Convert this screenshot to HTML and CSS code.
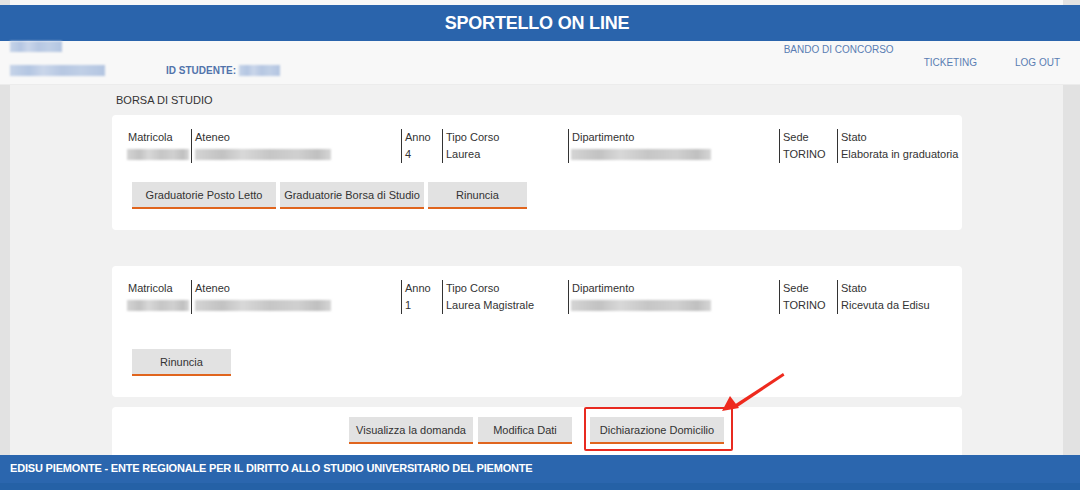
FILE: index.html
```html
<!DOCTYPE html>
<html lang="it">
<head>
<meta charset="utf-8">
<title>Sportello On Line</title>
<link rel="stylesheet" href="styles.css">
</head>
<body>
<div class="page">
  <div class="top-strip"></div>
  <header class="header"><h1 class="title">SPORTELLO ON LINE</h1></header>
  <div class="userbar">
    <div class="user-left">
      <div class="blur blur-blue blur-name"></div>
      <div class="user-row">
        <div class="blur blur-blue blur-cf"></div>
        <span class="id-label">ID STUDENTE:</span>
        <div class="blur blur-blue blur-id"></div>
      </div>
    </div>
    <nav class="user-nav">
      <a class="nav-link nav-top">BANDO DI CONCORSO</a>
      <a class="nav-link nav-low nav-ticket">TICKETING</a>
      <a class="nav-link nav-low nav-logout">LOG OUT</a>
    </nav>
  </div>
  <main class="main">
    <div class="section-title">BORSA DI STUDIO</div>

    <section class="card card-first">
      <div class="grid">
        <div class="col c-matr"><div>Matricola</div><div class="blur blur-gray b-matr"></div></div>
        <div class="col c-ate sep"><div>Ateneo</div><div class="blur blur-gray b-ate"></div></div>
        <div class="col c-anno sep"><div>Anno</div><div>4</div></div>
        <div class="col c-tipo sep"><div>Tipo Corso</div><div>Laurea</div></div>
        <div class="col c-dip sep"><div>Dipartimento</div><div class="blur blur-gray b-dip"></div></div>
        <div class="col c-sede sep"><div>Sede</div><div>TORINO</div></div>
        <div class="col c-stato sep"><div>Stato</div><div>Elaborata in graduatoria</div></div>
      </div>
      <div class="btns">
        <button class="btn btn-wide">Graduatorie Posto Letto</button>
        <button class="btn btn-wide">Graduatorie Borsa di Studio</button>
        <button class="btn btn-rin">Rinuncia</button>
      </div>
    </section>

    <section class="card card-second">
      <div class="grid">
        <div class="col c-matr"><div>Matricola</div><div class="blur blur-gray b-matr"></div></div>
        <div class="col c-ate sep"><div>Ateneo</div><div class="blur blur-gray b-ate"></div></div>
        <div class="col c-anno sep"><div>Anno</div><div>1</div></div>
        <div class="col c-tipo sep"><div>Tipo Corso</div><div>Laurea Magistrale</div></div>
        <div class="col c-dip sep"><div>Dipartimento</div><div class="blur blur-gray b-dip"></div></div>
        <div class="col c-sede sep"><div>Sede</div><div>TORINO</div></div>
        <div class="col c-stato sep"><div>Stato</div><div>Ricevuta da Edisu</div></div>
      </div>
      <div class="btns">
        <button class="btn btn-rin">Rinuncia</button>
      </div>
    </section>

    <section class="card card-actions">
      <button class="btn btn-act btn-vis">Visualizza la domanda</button>
      <button class="btn btn-act btn-mod">Modifica Dati</button>
      <span class="highlight">
        <button class="btn btn-act btn-dich">Dichiarazione Domicilio</button>
      </span>
    </section>
  </main>
  <footer class="footer">
    <div class="footer-text">EDISU PIEMONTE - ENTE REGIONALE PER IL DIRITTO ALLO STUDIO UNIVERSITARIO DEL PIEMONTE</div>
    <div class="footer-bottom"></div>
  </footer>
  <svg class="arrow" width="80" height="60" viewBox="0 0 80 60">
    <polygon points="65,3 66.5,5.5 18,38 16,35" fill="#ee2a1e"/>
    <polygon points="4,41 12,26 21,38" fill="#ee2a1e"/>
  </svg>
</div>
</body>
</html>
```

FILE: styles.css
```css
* { box-sizing: border-box; }
html, body { margin: 0; padding: 0; }
body {
  background: #e2e2e2;
  font-family: "Liberation Sans", Arial, sans-serif;
  color: #333;
  width: 1080px;
  height: 490px;
  overflow: hidden;
}
.page {
  position: relative;
  height: 490px;
  display: flex;
  flex-direction: column;
}
.top-strip {
  height: 5px;
  margin: 0 17px 0 10px;
  background: #f8f8f8;
}
.header {
  height: 36px;
  background: #2a64ac;
  display: flex;
  align-items: center;
  justify-content: center;
}
.title {
  margin: 0 0 0 -6px;
  font-size: 18px;
  font-weight: bold;
  color: #fff;
  letter-spacing: -0.2px;
}
.userbar {
  height: 44px;
  background: #f8f8f8;
  display: flex;
  justify-content: space-between;
  border-bottom: 1px solid #ececec;
}
.user-left {
  padding-left: 10px;
}
.blur {
  filter: blur(1.2px);
}
.blur-blue {
  background: linear-gradient(90deg, #c5d3e8 0%, #b4c6e2 20%, #cad6ea 35%, #b6c7e2 55%, #c0cfe6 75%, #b3c5e1 100%);
}
.blur-gray {
  background: linear-gradient(90deg, #d4d4d4 0%, #c2c2c2 20%, #d8d8d8 35%, #c6c6c6 55%, #d0d0d0 75%, #c0c0c0 90%, #d6d6d6 100%);
  height: 11px;
  margin-top: 3px;
}
.blur-name {
  width: 52px;
  height: 11px;
  margin-top: 0;
}
.user-row {
  display: flex;
  align-items: center;
  margin-top: 12px;
  height: 13px;
}
.blur-cf {
  width: 95px;
  height: 11px;
}
.id-label {
  margin-left: 61px;
  font-size: 10px;
  font-weight: bold;
  color: #5173ab;
}
.blur-id {
  width: 41px;
  height: 11px;
  margin-left: 3px;
}
.user-nav {
  display: flex;
  align-items: flex-start;
  padding-right: 20px;
}
.nav-link {
  font-size: 10px;
  color: #5a7db3;
  text-decoration: none;
}
.nav-top { margin-top: 3px; }
.nav-low { margin-top: 16px; }
.nav-ticket { margin-left: 30px; }
.nav-logout { margin-left: 38px; }

.main {
  flex: 1;
  min-height: 0;
  overflow: hidden;
  margin: 0 17px 0 10px;
  background: #f1f1f1;
  padding-left: 102px;
}
.section-title {
  font-size: 11px;
  padding: 9px 0 0 4px;
  height: 30px;
  color: #333;
}
.card {
  width: 850px;
  background: #fff;
  border-radius: 4px;
  font-size: 11px;
}
.card-first {
  padding: 14px 0 21px 16px;
  margin-bottom: 36px;
}
.card-second {
  padding: 14px 0 21px 16px;
  margin-bottom: 10px;
}
.card-second .btns { margin-top: 35px; }
.grid {
  display: flex;
  line-height: 17px;
  white-space: nowrap;
}
.col { height: 34px; }
.sep {
  border-left: 1px solid #333;
  padding-left: 3px;
}
.c-matr { width: 63px; }
.c-ate { width: 210px; }
.c-anno { width: 41px; }
.c-tipo { width: 126px; }
.c-dip { width: 211px; }
.c-sede { width: 58px; }
.c-stato { flex: 1; }
.b-matr { width: 62px; margin-left: -1px; }
.b-ate { width: 136px; }
.b-dip { width: 140px; margin-left: -1px; }

.btns {
  display: flex;
  gap: 4px;
  margin-top: 19px;
  padding-left: 4px;
}
.btn {
  font-family: "Liberation Sans", Arial, sans-serif;
  font-size: 11px;
  color: #333;
  background: #e2e2e2;
  border: 0;
  border-bottom: 2px solid #e0651e;
  height: 27px;
  padding: 0;
  margin: 0;
  white-space: nowrap;
  text-align: center;
  cursor: pointer;
}
.btn-wide { width: 144px; }
.btn-rin { width: 99px; }
.card-actions {
  display: flex;
  justify-content: center;
  align-items: flex-start;
  padding-top: 10px;
  height: 60px;
  padding-right: 1px;
}
.btn-vis { width: 124px; }
.btn-mod { width: 94px; margin-left: 5px; }
.btn-dich { width: 134px; }
.highlight {
  position: relative;
  margin-left: 18px;
  display: inline-block;
}
.highlight::before {
  content: "";
  position: absolute;
  left: -6px;
  top: -10px;
  right: -9px;
  bottom: -7px;
  border: 2px solid #e82a20;
  border-radius: 2px;
  pointer-events: none;
}

.footer {
  height: 35px;
  background: #2b66ae;
  display: flex;
  flex-direction: column;
}
.footer-text {
  height: 28px;
  line-height: 27px;
  padding-left: 10px;
  font-size: 11px;
  font-weight: bold;
  color: #fff;
  letter-spacing: -0.18px;
}
.footer-bottom {
  flex: 1;
  background: #2561a6;
}
.arrow {
  position: absolute;
  left: 718px;
  top: 370px;
}
```
